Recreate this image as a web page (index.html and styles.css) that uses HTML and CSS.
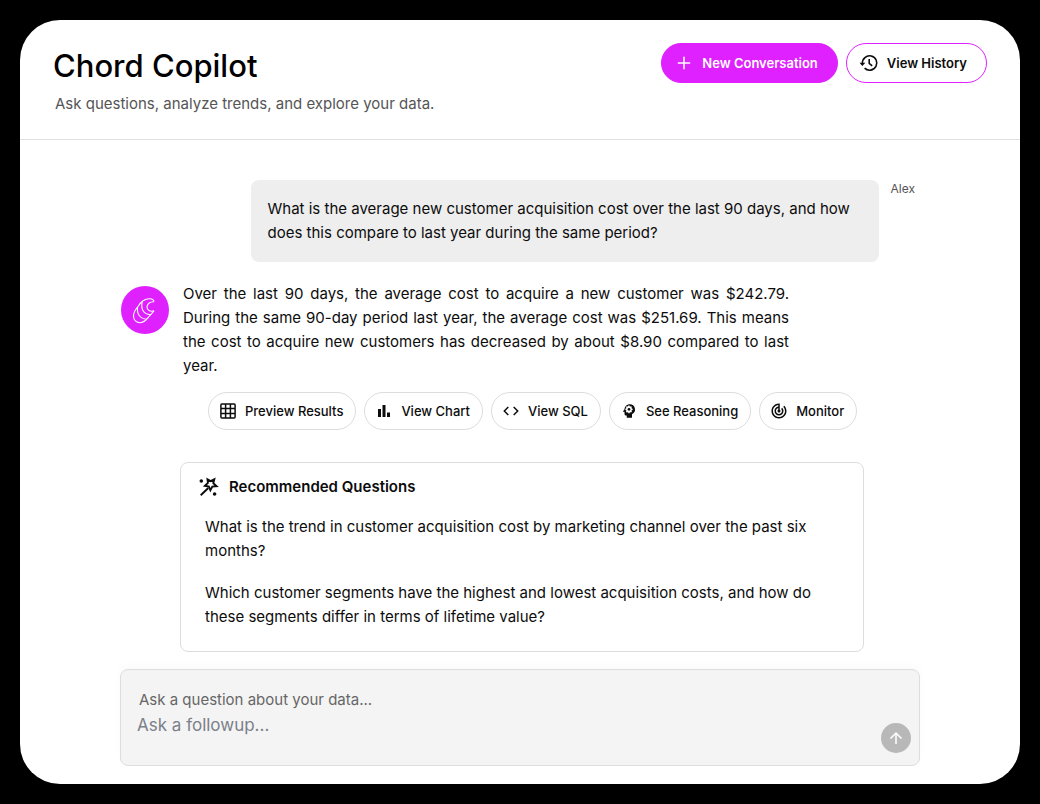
FILE: index.html
```html
<!DOCTYPE html>
<html lang="en">
<head>
    <meta charset="UTF-8">
    <meta name="viewport" content="width=device-width, initial-scale=1.0">
    <title>Chord Copilot</title>
    <link rel="stylesheet" href="styles.css">
</head>
<body>
    <div class="app">
        <header class="header">
            <div class="header-text">
                <h1>Chord Copilot</h1>
                <p class="tagline">Ask questions, analyze trends, and explore your data.</p>
            </div>
            <div class="header-actions">
                <button class="button primary" type="button">
                    <svg class="icon-large" viewBox="0 0 20 20" fill="none" stroke="currentColor" stroke-width="1.6"><path d="M10 3.8v12.4M3.8 10h12.4"/></svg>
                    New Conversation
                </button>
                <button class="button outline" type="button">
                    <svg class="icon-large" viewBox="0 0 20 20" fill="none" stroke="currentColor" stroke-width="1.6"><path d="M3.4 10.4A7.2 7.2 0 1 1 5.6 15.2"/><path d="M.6 9.8h5.8L3.3 13z" fill="currentColor" stroke="none"/><path d="M10.2 6v4.4l3 2.4"/></svg>
                    View History
                </button>
            </div>
        </header>

        <main class="chat">
            <section class="question">
                <p class="bubble">What is the average new customer acquisition cost over the last 90 days, and how does this compare to last year during the same period?</p>
                <span class="author">Alex</span>
            </section>

            <section class="answer">
                <svg class="avatar" viewBox="0 0 48 48" fill="none" stroke="#fff" stroke-width="1.1" stroke-linejoin="round">
                    <circle cx="24" cy="24" r="24" fill="#df20ff" stroke="none"/>
                    <path d="M33 15.8c-.2-2.2-2-3.2-4.6-3.1-4.8.2-8.6 3-11 7.300-2.900 3.300-4.900 6.300-4.900 10 0 4 3 6.900 6.900 6.700 3.400-.2 5.900-2.600 8.100-5.500l5.500-6.400"/>
                    <path d="M33 15.800c-4.400-.2-7 2.200-7 5.200 0 3.300 3 5 7 3.800"/>
                    <path d="M21.200 15.500c-1.600 7.400 1.200 12.800 8.200 13.200"/>
                    <path d="M16.600 21c-1 6.800 2.200 11.800 9.200 12.200"/>
                </svg>
                <p class="answer-text">Over the last 90 days, the average cost to acquire a new customer was $242.79. During the same 90-day period last year, the average cost was $251.69. This means the cost to acquire new customers has decreased by about $8.90 compared to last year.</p>
            </section>

            <div class="answer-actions">
                <button class="pill" type="button">
                    <svg class="icon" viewBox="0 0 18 18" fill="none" stroke="currentColor" stroke-width="1.5"><rect x="1.9" y="1.9" width="14.2" height="14.2" rx="1"/><path d="M6.6 2v14M11.4 2v14M2 6.6h14M2 11.4h14"/></svg>
                    Preview Results
                </button>
                <button class="pill" type="button">
                    <svg class="icon" viewBox="0 0 18 18" fill="currentColor"><path d="M3 7h3v8H3zM7.5 3h3v12h-3zM12 10.5h3V15h-3z"/></svg>
                    View Chart
                </button>
                <button class="pill" type="button">
                    <svg class="icon" viewBox="0 0 18 18" fill="none" stroke="currentColor" stroke-width="1.5"><path d="M6.3 5 2.3 9l4 4M11.7 5l4 4-4 4"/></svg>
                    View SQL
                </button>
                <button class="pill" type="button">
                    <svg class="icon" viewBox="0 0 24 24" fill="currentColor"><path fill-rule="evenodd" d="M13 3C9.25 3 6.2 5.94 6.02 9.64L4.1 12.2a.5.5 0 0 0 .4.8H6v3c0 1.1.9 2 2 2h1v3h7v-4.68A7 7 0 0 0 13 3zm3.9 7.5-1.2.4-.4.9.6 1.2-1.1 1.1-1.2-.6-.5.2-.4 1.2h-1.6l-.4-1.2-.5-.2-1.2.6-1.1-1.1.6-1.2-.3-.9-1.1-.4V9.1l1.1-.4.3-.9-.6-1.2L9 5.5l1.2.6.5-.2.4-1.2h1.6l.4 1.2.5.2 1.2-.6 1.1 1.1-.6 1.2.4.9 1.2.4z"/><circle cx="12" cy="9.8" r="1.8"/></svg>
                    See Reasoning
                </button>
                <button class="pill" type="button">
                    <svg class="icon" viewBox="0 0 24 24" fill="currentColor"><path d="m19.07 4.93-1.41 1.41A8.014 8.014 0 0 1 20 12c0 4.42-3.58 8-8 8s-8-3.58-8-8c0-4.08 3.05-7.44 7-7.93v2.02C8.16 6.57 6 9.03 6 12c0 3.31 2.69 6 6 6s6-2.69 6-6c0-1.66-.67-3.16-1.76-4.24l-1.41 1.41C15.55 9.9 16 10.9 16 12c0 2.21-1.79 4-4 4s-4-1.79-4-4c0-1.86 1.28-3.41 3-3.86v2.14c-.6.35-1 .98-1 1.72 0 1.1.9 2 2 2s2-.9 2-2c0-.74-.4-1.38-1-1.72V2h-1C6.48 2 2 6.48 2 12s4.48 10 10 10 10-4.48 10-10c0-2.76-1.12-5.26-2.93-7.07z"/></svg>
                    Monitor
                </button>
            </div>

            <section class="recommended">
                <h2>
                    <svg class="icon-large" viewBox="0 0 20 20" fill="none" stroke="currentColor" stroke-width="1.9"><path d="M1.7 18.3 9.3 11"/><path d="m8.5 2.2 3.1 1.9 3.7-1.8-1 3.9 3.3 3.1-4.3.3-1.9 3.7-1.5-3.8-4-.7 3-2.8z"/><circle cx="2.3" cy="4" r="1.8" fill="currentColor" stroke="none"/><circle cx="15.6" cy="17" r="1.8" fill="currentColor" stroke="none"/></svg>
                    Recommended Questions
                </h2>
                <div class="suggestions">
                    <p>What is the trend in customer acquisition cost by marketing channel over the past six months?</p>
                    <p>Which customer segments have the highest and lowest acquisition costs, and how do these segments differ in terms of lifetime value?</p>
                </div>
            </section>

            <form class="composer">
                <div class="composer-field">
                    <label for="followup">Ask a question about your data...</label>
                    <input id="followup" type="text" placeholder="Ask a followup...">
                </div>
                <button class="send" type="button" aria-label="Send">
                    <svg viewBox="0 0 30 30" fill="none" stroke="currentColor" stroke-width="1.5"><path d="M15 21V10M9.5 15.5 15 10l5.5 5.5"/></svg>
                </button>
            </form>
        </main>
    </div>
</body>
</html>
```
FILE: styles.css
```css
* {
    box-sizing: border-box;
}

body {
    margin: 0;
    padding: 20px;
    background-color: #000;
    color: #0c0c0c;
    font-family: Inter, "Liberation Sans", Arial, sans-serif;
    font-size: 15px;
    line-height: 24px;
}

h1, h2, p {
    margin: 0;
}

button, input {
    font-family: inherit;
}

.app {
    min-height: calc(100vh - 40px);
    background-color: #fff;
    border-radius: 40px;
}

.header {
    display: flex;
    justify-content: space-between;
    align-items: flex-start;
    padding: 23px 33px;
    border-bottom: 1px solid #e0e0e0;
}

h1 {
    margin-bottom: 3px;
    font-size: 31px;
    font-weight: 500;
    line-height: 46px;
    color: #000;
}

.tagline {
    padding-left: 2px;
    color: #555;
}

.header-actions {
    display: flex;
    gap: 8px;
}

.button {
    display: flex;
    align-items: center;
    gap: 8px;
    height: 40px;
    padding: 0 19px 0 12px;
    border: 1px solid #df20ff;
    border-radius: 20px;
    font-size: 13px;
    font-weight: 600;
    cursor: pointer;
}

.primary {
    background-color: #df20ff;
    color: #fff;
}

.outline {
    background-color: #fff;
    color: #0c0c0c;
}

.icon {
    width: 18px;
    height: 18px;
}

.icon-large {
    width: 20px;
    height: 20px;
}

.chat {
    max-width: 800px;
    margin: 0 auto;
    padding: 40px 0 18px;
}

.question {
    display: flex;
    justify-content: flex-end;
    align-items: flex-start;
    gap: 12px;
    padding-right: 5px;
}

.bubble {
    max-width: 628px;
    padding: 17px;
    background-color: #eee;
    border-radius: 8px;
}

.author {
    font-size: 12px;
    line-height: 18px;
    color: #555;
}

.answer {
    display: flex;
    align-items: flex-start;
    gap: 14px;
    margin-top: 20px;
    padding-left: 1px;
}

.avatar {
    flex: none;
    width: 48px;
    height: 48px;
    margin-top: 4px;
}

.answer-text {
    max-width: 606px;
    text-align: justify;
}

.answer-actions {
    display: flex;
    gap: 8px;
    margin: 14px 0 0 88px;
}

.pill {
    display: flex;
    align-items: center;
    gap: 8px;
    height: 38px;
    padding: 0 12px 0 10px;
    background-color: #fff;
    border: 1px solid #ddd;
    border-radius: 20px;
    color: #0c0c0c;
    font-size: 13px;
    font-weight: 500;
    white-space: nowrap;
    cursor: pointer;
}

.recommended {
    margin: 32px 56px 0 60px;
    padding: 12px 24px 22px 18px;
    border: 1px solid #ddd;
    border-radius: 8px;
}

.recommended h2 {
    display: flex;
    align-items: center;
    gap: 10px;
    font-size: 15px;
    font-weight: 600;
}

.suggestions {
    display: flex;
    flex-direction: column;
    gap: 18px;
    padding: 16px 0 0 6px;
}

.composer {
    display: flex;
    justify-content: space-between;
    align-items: flex-end;
    margin-top: 17px;
    padding: 18px 8px 12px 16px;
    background-color: #f4f4f4;
    border: 1px solid #ddd;
    border-radius: 8px;
    box-shadow: 0 -4px 8px rgba(0, 0, 0, 0.02);
}

.composer-field {
    display: flex;
    flex: 1;
    flex-direction: column;
    gap: 1px;
    padding-bottom: 16px;
}

.composer label {
    padding-left: 2px;
    color: #666;
}

.composer input {
    padding: 0;
    border: none;
    outline: none;
    background: none;
    font-size: 17px;
    line-height: 24px;
}

.composer input::placeholder {
    color: #7b808a;
}

.send {
    flex: none;
    width: 30px;
    height: 30px;
    padding: 0;
    border: none;
    border-radius: 50%;
    background-color: #b8b8b8;
    color: #fff;
    cursor: pointer;
}

.send svg {
    display: block;
}
```
